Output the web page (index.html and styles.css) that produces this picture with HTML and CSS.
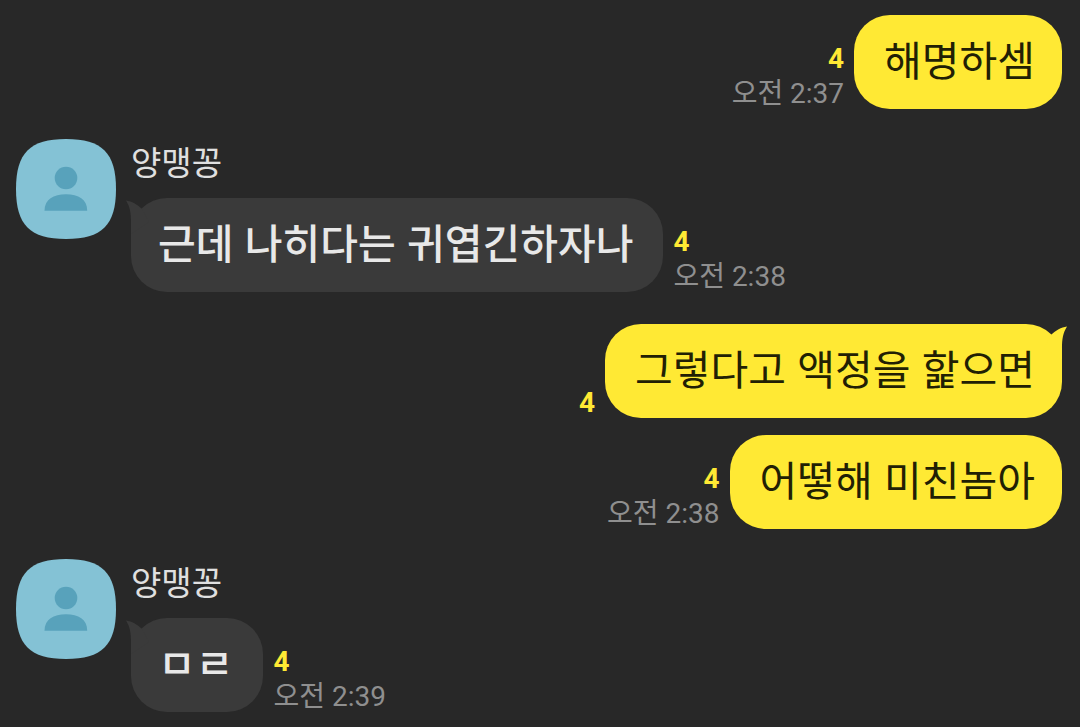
FILE: index.html
```
<!DOCTYPE html>
<html lang="ko">

<head>
    <meta charset="UTF-8">
    <meta name="viewport" content="width=device-width, initial-scale=1.0">
    <title>채팅</title>
    <link rel="stylesheet" href="styles.css">
</head>

<body>

    <main class="chat">
        <div class="message mine">
            <div class="meta">
                <span class="unread">4</span>
                <time class="time">오전 2:37</time>
            </div>
            <p class="bubble">해명하셈</p>
        </div>

        <div class="group">
            <svg class="avatar" viewBox="0 0 100 100" aria-hidden="true">
                <path class="avatar-bg" d="M50 0C86 0 100 14 100 50S86 100 50 100 0 86 0 50 14 0 50 0Z" />
                <circle class="avatar-person" cx="50" cy="39" r="11.3" />
                <path class="avatar-person" d="M28.5 71.7C28.5 60.5 37.5 55.3 50 55.3S71.2 60.5 71.2 71.7Z" />
            </svg>
            <div class="content">
                <div class="name">양맹꽁</div>
                <div class="message">
                    <p class="bubble">
                        <svg class="tail" viewBox="0 0 24 36" aria-hidden="true">
                            <path d="M1 2.5C7 3.500 12 6 17 11L24 24 6 36V24C6 15 5 9 1 2.5Z" />
                        </svg>근데 나히다는 귀엽긴하자나</p>
                    <div class="meta">
                        <span class="unread">4</span>
                        <time class="time">오전 2:38</time>
                    </div>
                </div>
            </div>
        </div>

        <div class="stack">
            <div class="message mine">
                <div class="meta">
                    <span class="unread">4</span>
                </div>
                <p class="bubble">
                    <svg class="tail" viewBox="0 0 24 36" aria-hidden="true">
                        <path d="M1 2.5C7 3.500 12 6 17 11L24 24 6 36V24C6 15 5 9 1 2.5Z" />
                    </svg>그렇다고 액정을 핥으면</p>
            </div>
            <div class="message mine">
                <div class="meta">
                    <span class="unread">4</span>
                    <time class="time">오전 2:38</time>
                </div>
                <p class="bubble">어떻해 미친놈아</p>
            </div>
        </div>

        <div class="group">
            <svg class="avatar" viewBox="0 0 100 100" aria-hidden="true">
                <path class="avatar-bg" d="M50 0C86 0 100 14 100 50S86 100 50 100 0 86 0 50 14 0 50 0Z" />
                <circle class="avatar-person" cx="50" cy="39" r="11.3" />
                <path class="avatar-person" d="M28.5 71.7C28.5 60.5 37.5 55.3 50 55.3S71.2 60.5 71.2 71.7Z" />
            </svg>
            <div class="content">
                <div class="name">양맹꽁</div>
                <div class="message">
                    <p class="bubble">
                        <svg class="tail" viewBox="0 0 24 36" aria-hidden="true">
                            <path d="M1 2.5C7 3.500 12 6 17 11L24 24 6 36V24C6 15 5 9 1 2.5Z" />
                        </svg>ㅁㄹ</p>
                    <div class="meta">
                        <span class="unread">4</span>
                        <time class="time">오전 2:39</time>
                    </div>
                </div>
            </div>
        </div>
    </main>

</body>

</html>
```

FILE: styles.css
```
:root {
    --bg: #282828;
    --yellow: #ffe934;
    --bubble: #3a3a3a;
}

body {
    margin: 0;
    background: var(--bg);
    font-family: Roboto, "Noto Sans CJK KR", sans-serif;
}

.chat {
    display: flex;
    flex-direction: column;
    gap: 30px;
    padding: 15px 18px 12px 16px;
}

.group {
    display: flex;
    align-items: flex-start;
    gap: 15px;
    padding-bottom: 2px;
}

.stack {
    display: flex;
    flex-direction: column;
    gap: 17px;
}

.avatar {
    flex-shrink: 0;
    width: 100px;
    height: 100px;
}

.avatar-bg {
    fill: #84c2d5;
}

.avatar-person {
    fill: #58a2bb;
}

.name {
    height: 59px;
    color: #e0e0e0;
    font-size: 33px;
    line-height: 50px;
}

.message {
    display: flex;
    align-items: flex-end;
    gap: 10px;
}

.message.mine {
    justify-content: flex-end;
}

.bubble {
    --fill: var(--bubble);
    position: relative;
    margin: 0;
    padding: 16px 30px 16px 27px;
    border-radius: 36px;
    background: var(--fill);
    color: #e8e8e8;
    font-family: "Liberation Sans", "Noto Sans CJK KR", sans-serif;
    font-size: 41px;
    font-weight: 500;
    line-height: 62px;
}

.mine .bubble {
    --fill: var(--yellow);
    padding: 16px 27px 16px 30px;
    color: #221f04;
    font-weight: 400;
}

/* the tail hangs over the top corner of the bubble */
.tail {
    position: absolute;
    top: 0;
    left: -6px;
    width: 24px;
    height: 36px;
    fill: var(--fill);
}

.mine .tail {
    left: auto;
    right: -6px;
    transform: scaleX(-1);
}

.meta {
    display: flex;
    flex-direction: column;
    gap: 5px;
    font-size: 28px;
    line-height: 30px;
}

.mine .meta {
    align-items: flex-end;
}

.unread {
    color: var(--yellow);
    font-weight: 700;
}

.time {
    color: #8f8f8f;
}
```
